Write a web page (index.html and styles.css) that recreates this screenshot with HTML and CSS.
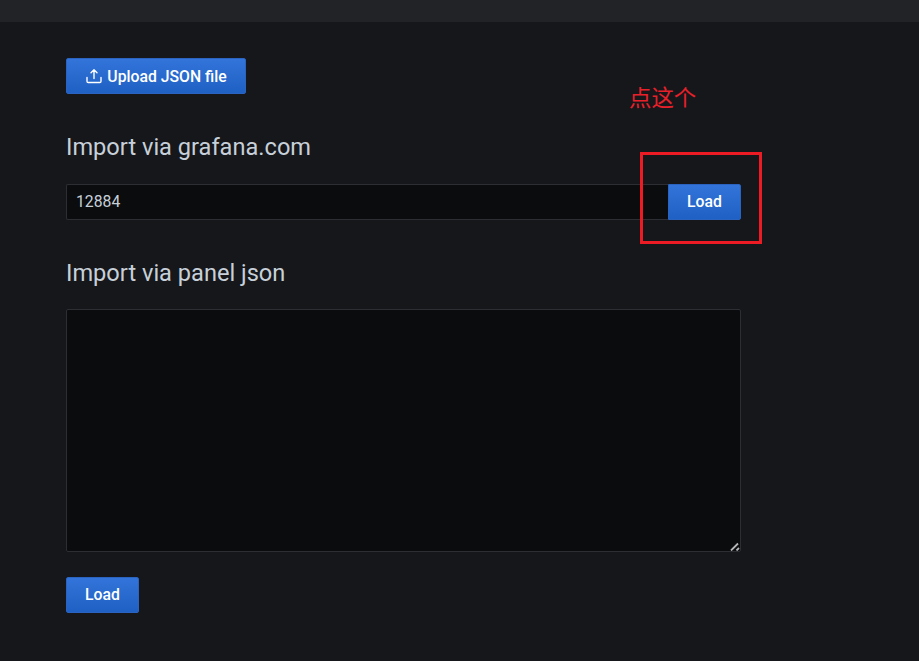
FILE: index.html
```html
<!DOCTYPE html>
<html lang="zh">
<head>
    <meta charset="UTF-8">
    <title>Import dashboard</title>
    <link rel="stylesheet" href="styles.css">
</head>
<body>

    <div class="topbar"></div>

    <div class="page">
        <button class="btn btn-upload">
            <svg class="icon" viewBox="0 0 16 16" width="16" height="16" fill="none" stroke="currentColor" stroke-width="1.4" stroke-linecap="round" stroke-linejoin="round">
                <path d="M8 10.5V2M5 4.8 8 1.8l3 3"/>
                <path d="M1 9.5v3.8c0 .7.5 1.2 1.2 1.2h11.6c.7 0 1.2-.5 1.2-1.2V9.5"/>
            </svg>
            Upload JSON file
        </button>

        <h2 class="title title-first">Import via grafana.com</h2>
        <div class="input-row">
            <input class="input" type="text" value="12884">
            <button class="btn btn-addon">Load</button>
        </div>

        <h2 class="title title-second">Import via panel json</h2>
        <div class="json-wrap">
            <textarea class="json-box"></textarea>
            <svg class="resizer" viewBox="0 0 10 10" width="10" height="10" fill="none" stroke="#b4b6b8" stroke-width="1.8">
                <path d="M1 9.5 8 2.5M6.5 9.5 9 7"/>
            </svg>
        </div>

        <button class="btn btn-load">Load</button>
    </div>

    <div class="note">点这个</div>
    <div class="note-box"></div>

</body>
</html>
```

FILE: styles.css
```css
* { margin: 0; padding: 0; box-sizing: border-box; font-family: Roboto, "Noto Sans CJK SC", sans-serif; }
body { background: #16171b; height: 661px; overflow: hidden; }
.topbar { height: 22px; background: #212327; }
.page { width: 741px; padding: 36px 0 0 66px; display: flex; flex-direction: column; align-items: flex-start; }
.btn { height: 36px; padding-bottom: 1px; border: 1px solid #2a64c0; border-radius: 2px; background: linear-gradient(#3274d9, #1f60c4); color: white; font-size: 15.75px; font-weight: 500; display: flex; align-items: center; justify-content: center; }
.btn-upload { width: 180px; gap: 5px; padding: 0 0 0 1px; }
.icon { flex: none; }
.title { color: #c7d0d9; font-size: 23.6px; font-weight: 400; line-height: 28px; }
.title-first { margin-top: 39px; }
.title-second { margin-top: 39px; }
.input-row { display: flex; width: 100%; margin-top: 23px; }
.input { flex: 1; min-width: 0; height: 36px; padding: 0 9px 2px; background: #0b0c0e; border: 1px solid #2c2e33; border-right: none; border-radius: 2px 0 0 2px; color: #c7d0d9; font-size: 15.75px; outline: none; }
.btn-addon { width: 73px; border-radius: 0 2px 2px 0; }
.json-wrap { position: relative; width: 100%; height: 243px; margin-top: 22px; }
.json-box { display: block; width: 100%; height: 100%; resize: none; background: #0b0c0e; border: 1px solid #2c2e33; border-radius: 2px; outline: none; color: #c7d0d9; }
.resizer { position: absolute; right: 1px; bottom: 1px; }
.btn-load { width: 73px; margin-top: 25px; }

/* red annotation drawn over the screenshot */
.note { position: absolute; left: 629px; top: 83px; color: #e8202a; font-size: 22.4px; line-height: 30px; }
.note-box { position: absolute; left: 640px; top: 152px; width: 122px; height: 92px; border: 3px solid #ed1c24; }
```
